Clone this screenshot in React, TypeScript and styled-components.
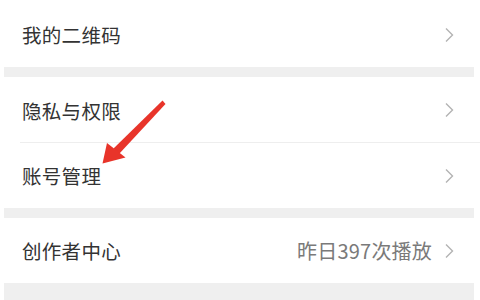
import React from 'react'
import styled, { createGlobalStyle } from 'styled-components'

const GlobalStyle = createGlobalStyle`
  html, body {
    margin: 0;
    padding: 0;
    background: #ffffff;
  }
  body {
    font-family: 'Noto Sans CJK SC', 'Noto Sans', sans-serif;
  }
`

type Item = {
  label: string
  extra?: string
  divider?: boolean
}

const groups: Item[][] = [
  [{ label: '我的二维码' }],
  [{ label: '隐私与权限', divider: true }, { label: '账号管理' }],
  [{ label: '创作者中心', extra: '昨日397次播放' }],
]

export default function App() {
  return (
    <>
      <GlobalStyle />
      <Page>
        <TopLine />
        {groups.map((group, gi) => (
          <React.Fragment key={gi}>
            {gi > 0 && <Gap />}
            <Group>
              {group.map((item) => (
                <Row key={item.label} divider={item.divider}>
                  <Label>{item.label}</Label>
                  <Right>
                    {item.extra && <Extra>{item.extra}</Extra>}
                    <Chevron />
                  </Right>
                </Row>
              ))}
            </Group>
          </React.Fragment>
        ))}
        <Gap $tall />
        <Arrow />
      </Page>
    </>
  )
}

const Chevron = () => (
  <ChevronSvg width='10' height='16' viewBox='0 0 10 16'>
    <path d='M2 1.5 L8.5 8 L2 14.5' fill='none' stroke='#b3b3b3' strokeWidth='1.4' />
  </ChevronSvg>
)

const Arrow = () => (
  <ArrowSvg width='480' height='300' viewBox='0 0 480 300'>
    <path d='M162.5 100.5 L165.5 104 L119 154 L113.5 148.5 Z' fill='#e8342a' />
    <path d='M102.5 163.5 L107 143 L125.5 157.5 Z' fill='#e8342a' />
  </ArrowSvg>
)

const Page = styled.div`
  position: relative;
  width: 480px;
  height: 300px;
  overflow: hidden;
  display: flex;
  flex-direction: column;
  background: #ffffff;
`

const TopLine = styled.div`
  height: 1px;
  margin: 2px 0 0 20px;
  background: #f0f0f0;
`

const Group = styled.div`
  display: flex;
  flex-direction: column;
`

const Row = styled.div<{ divider?: boolean }>`
  height: 65px;
  display: flex;
  align-items: center;
  justify-content: space-between;
  padding: 0 26px 0 22px;
  position: relative;
  ${(p) =>
    p.divider &&
    `
    height: 66px;
    &::after {
      content: '';
      position: absolute;
      left: 20px;
      right: 0;
      bottom: 0;
      height: 1px;
      background: #eeeeee;
    }
  `}
`

const Label = styled.span`
  font-size: 19.5px;
  color: #333333;
  letter-spacing: 0.3px;
`

const Right = styled.div`
  display: flex;
  align-items: center;
  gap: 12px;
`

const Extra = styled.span`
  font-size: 20px;
  color: #7a7a7a;
  letter-spacing: 0.2px;
`

const ChevronSvg = styled.svg`
  display: block;
`

const Gap = styled.div<{ $tall?: boolean }>`
  height: ${(p) => (p.$tall ? '20px' : '10px')};
  margin: 0 6px 0 4px;
  background: #efefef;
  flex-shrink: 0;
`

const ArrowSvg = styled.svg`
  position: absolute;
  left: 0;
  top: 0;
  pointer-events: none;
`
